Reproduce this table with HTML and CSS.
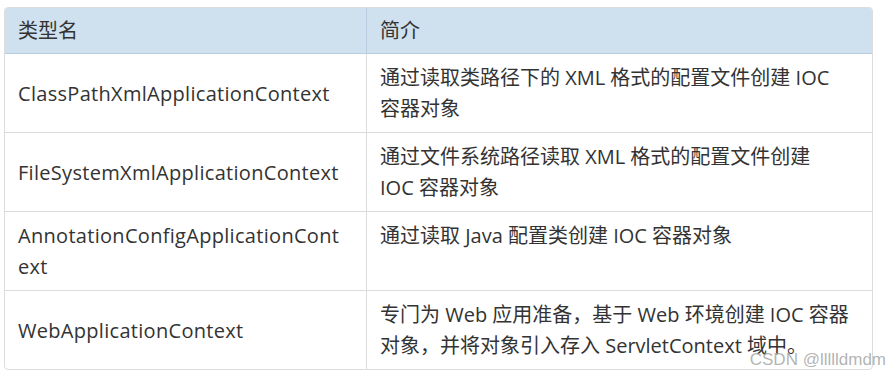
FILE: index.html
```html
<!DOCTYPE html>
<html lang="zh-CN">
<head>
<meta charset="utf-8">
<title>ApplicationContext</title>
<link rel="stylesheet" href="styles.css">
</head>
<body>
<div class="wrap">
  <table class="tbl">
    <thead>
      <tr><th class="c1">类型名</th><th class="c2">简介</th></tr>
    </thead>
    <tbody>
      <tr><td class="c1">ClassPathXmlApplicationContext</td><td class="c2">通过读取类路径下的 XML 格式的配置文件创建 IOC 容器对象</td></tr>
      <tr><td class="c1">FileSystemXmlApplicationContext</td><td class="c2">通过文件系统路径读取 XML 格式的配置文件创建 <span class="nw">IOC 容器对象</span></td></tr>
      <tr><td class="c1">AnnotationConfigApplicationContext</td><td class="c2 top">通过读取 Java 配置类创建 IOC 容器对象</td></tr>
      <tr><td class="c1">WebApplicationContext</td><td class="c2">专门为 Web 应用准备，基于 Web 环境创建 IOC 容器对象，并将对象引入存入 ServletContext 域中。</td></tr>
    </tbody>
  </table>
  <div class="mark">CSDN @llllldmdm</div>
</div>
</body>
</html>
```
FILE: styles.css
```css
html, body { margin: 0; padding: 0; background: #fff; }
body { width: 886px; height: 376px; overflow: hidden; position: relative; }
.wrap { padding: 7px 0 0 4px; }
.tbl {
  width: 869px;
  table-layout: fixed;
  border-collapse: separate;
  border-spacing: 0;
  border: 1px solid #dcdcdc;
  border-radius: 4px;
  overflow: hidden;
  font-family: "Open Sans", "Noto Sans CJK SC", sans-serif;
  font-size: 20px;
  color: #333;
}
.tbl th, .tbl td {
  text-align: left;
  font-weight: normal;
  padding: 8px 13px;
  line-height: 31px;
  vertical-align: middle;
}
.tbl th { background: #cfe0ee; padding: 7px 13px; border-bottom: 1px solid #b8cde0; }
.tbl th.c1 { border-right: 1px solid #b8cde0; }
.tbl td { border-top: 1px solid #dcdcdc; }
.tbl tbody tr:first-child td { border-top: none; }
.tbl td.c1 {
  border-right: 1px solid #dcdcdc;
  word-break: break-all;
  letter-spacing: 0.3px;
  padding-right: 18px;
}
.tbl td.c2 { padding-right: 22px; }
.tbl td.top { vertical-align: top; }
.nw { white-space: nowrap; }
.c1 { width: 335px; }
.mark {
  position: absolute;
  right: 0;
  bottom: 6px;
  font-family: "Liberation Sans", Arial, sans-serif;
  font-size: 17px;
  color: rgba(160,160,160,0.8);
}
```
